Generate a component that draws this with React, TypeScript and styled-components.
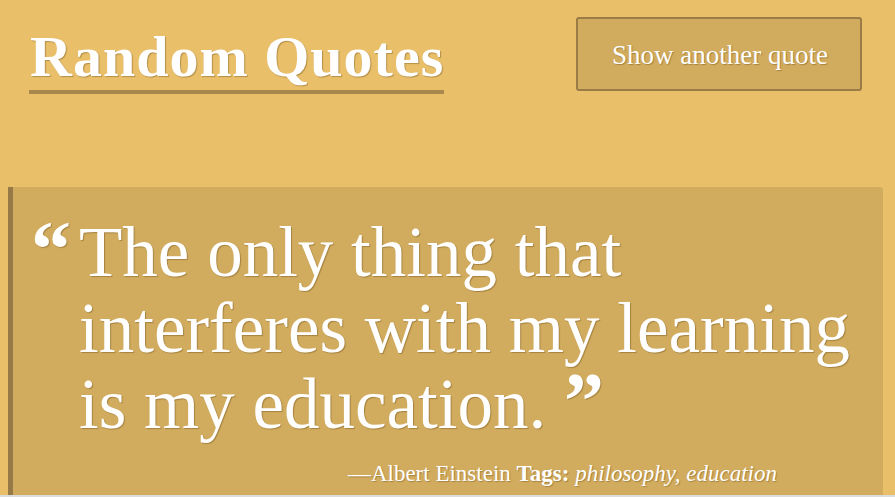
import React from "react";
import styled, { createGlobalStyle } from "styled-components";

const GlobalStyle = createGlobalStyle`
  html { background: #dcdcdc; }
  body {
    margin: 0;
    background: #dcdcdc;
    font-family: "Liberation Serif", "Times New Roman", serif;
  }
`;

const Page = styled.div`
  height: 495px;
  overflow: hidden;
  background: #e9bf6a;
  color: #ffffff;
  text-shadow: 1px 1px 1px rgba(80, 55, 10, 0.35);
`;

const Header = styled.header`
  display: flex;
  justify-content: space-between;
  align-items: flex-start;
  padding: 0 33px 0 29px;
`;

const Title = styled.h1`
  display: inline-block;
  margin: 28px 0 0;
  padding: 0 0 4px 1px;
  font-size: 58px;
  line-height: 58px;
  font-weight: 700;
  letter-spacing: 1px;
  border-bottom: 4px solid #a8884d;
`;

const NewQuoteButton = styled.button`
  margin-top: 17px;
  width: 286px;
  height: 74px;
  box-sizing: border-box;
  background: #d2ac5e;
  border: 2px solid #9b7b46;
  border-radius: 3px;
  color: #ffffff;
  font-family: "Liberation Serif", "Times New Roman", serif;
  font-size: 27px;
  text-shadow: 1px 1px 1px rgba(80, 55, 10, 0.35);
  cursor: pointer;
  padding: 3px 0 0 2px;
`;

const Card = styled.section`
  margin: 93px 12px 0 8px;
  padding: 27px 0 20px 18px;
  background: #d2ac5e;
  border-left: 5px solid #967946;
  border-radius: 0 3px 3px 0;
`;

const QuoteRow = styled.div`
  display: flex;
  align-items: baseline;
  gap: 8px;
`;

const Mark = styled.span`
  font-size: 80px;
  line-height: 56px;
  font-weight: 700;
`;

const QuoteText = styled.blockquote`
  margin: 0;
  width: 800px;
  font-size: 71px;
  line-height: 76px;
  font-weight: 400;
`;

const Attribution = styled.p`
  margin: 17px 0 0;
  padding-right: 106px;
  text-align: right;
  font-size: 23px;
  line-height: 30px;
`;

const Tags = styled.strong`
  font-weight: 700;
`;

const TagList = styled.em`
  font-style: italic;
`;

export default function App() {
  return (
    <>
      <GlobalStyle />
      <Page>
        <Header>
          <Title>Random Quotes</Title>
          <NewQuoteButton>Show another quote</NewQuoteButton>
        </Header>
        <Card>
          <QuoteRow>
            <Mark>“</Mark>
            <QuoteText>
              The only thing that interferes with my learning is my education.{" "}
              <Mark>”</Mark>
            </QuoteText>
          </QuoteRow>
          <Attribution>
            —Albert Einstein <Tags>Tags:</Tags>{" "}
            <TagList>philosophy, education</TagList>
          </Attribution>
        </Card>
      </Page>
    </>
  );
}
